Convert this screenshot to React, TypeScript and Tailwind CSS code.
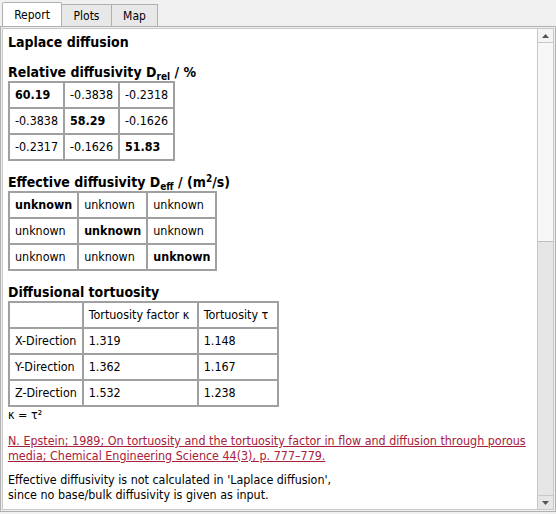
import React from "react";

const cell = "border border-[#a0a0a0] px-[5px] h-[26px] whitespace-nowrap";

function Grid({ rows, bold }: { rows: string[][]; bold: boolean }) {
  return (
    <table className="border border-[#a0a0a0] border-separate [border-spacing:0] text-[12.4px]">
      <tbody>
        {rows.map((r, i) => (
          <tr key={i}>
            {r.map((c, j) => (
              <td key={j} className={cell + (bold && i === j ? " font-bold" : "")}>
                {c}
              </td>
            ))}
          </tr>
        ))}
      </tbody>
    </table>
  );
}

export default function App() {
  return (
    <div
      className="w-[556px] h-[514px] bg-[#f0f0f0] flex flex-col text-black"
      style={{ fontFamily: "Tahoma, 'DejaVu Sans Condensed', 'Liberation Sans', sans-serif" }}
    >
      <div className="flex items-end h-[26px] pl-[2px] text-[12px]">
        <div className="h-[24px] w-[60px] bg-white border border-b-0 border-[#b0b0b0] rounded-t-[2px] flex items-center justify-center">
          Report
        </div>
        <div className="h-[22px] w-[50px] bg-[#e8e8e8] border border-l-0 border-b-0 border-[#b0b0b0] flex items-center justify-center">
          Plots
        </div>
        <div className="h-[22px] w-[46px] bg-[#e8e8e8] border border-l-0 border-b-0 border-[#b0b0b0] flex items-center justify-center">
          Map
        </div>
      </div>
      <div className="flex-1 mb-[2px] border border-[#b0b0b0] bg-[#f0f0f0] p-[1px] flex">
        <div className="flex-1 border border-[#c8c8c8] bg-white flex min-h-0">
          <div className="flex-1 pl-[5px] pt-[4px] overflow-hidden">
            <div className="text-[14px] font-bold leading-[18px]">Laplace diffusion</div>
            <div className="text-[14px] font-bold leading-[18px] mt-[12px]">
              Relative diffusivity D<sub className="text-[10px]">rel</sub> / %
            </div>
            <Grid
              bold
              rows={[
                ["60.19", "-0.3838", "-0.2318"],
                ["-0.3838", "58.29", "-0.1626"],
                ["-0.2317", "-0.1626", "51.83"],
              ]}
            />
            <div className="text-[14px] font-bold leading-[18px] mt-[12px]">
              Effective diffusivity D<sub className="text-[10px]">eff</sub> / (m<sup className="text-[10px]">2</sup>/s)
            </div>
            <Grid
              bold
              rows={[
                ["unknown", "unknown", "unknown"],
                ["unknown", "unknown", "unknown"],
                ["unknown", "unknown", "unknown"],
              ]}
            />
            <div className="text-[14px] font-bold leading-[18px] mt-[12px]">Diffusional tortuosity</div>
            <table className="border border-[#a0a0a0] border-separate [border-spacing:0] text-[12.4px]">
              <tbody>
                <tr>
                  <td className={cell + " w-[72px]"}></td>
                  <td className={cell + " w-[115px]"}>Tortuosity factor κ</td>
                  <td className={cell + " w-[80px]"}>Tortuosity τ</td>
                </tr>
                {[
                  ["X-Direction", "1.319", "1.148"],
                  ["Y-Direction", "1.362", "1.167"],
                  ["Z-Direction", "1.532", "1.238"],
                ].map((r, i) => (
                  <tr key={i}>
                    {r.map((c, j) => (
                      <td key={j} className={cell}>
                        {c}
                      </td>
                    ))}
                  </tr>
                ))}
              </tbody>
            </table>
            <div className="text-[12.4px] leading-[15px]">κ = τ²</div>
            <div className="text-[12.4px] leading-[15px] mt-[11px] text-[#a8203a] underline pr-[8px]">
              N. Epstein; 1989; On tortuosity and the tortuosity factor in flow and diffusion through porous
              media; Chemical Engineering Science 44(3), p. 777–779.
            </div>
            <div className="text-[12.4px] leading-[15px] mt-[9px]">
              Effective diffusivity is not calculated in 'Laplace diffusion',
              <br />
              since no base/bulk diffusivity is given as input.
            </div>
          </div>
          <div className="w-[16px] flex flex-col bg-[#e6e6e6] border-l border-[#c8c8c8]">
            <div className="h-[14px] bg-[#f4f4f4] border-b border-[#c8c8c8] flex items-center justify-center">
              <svg width="7" height="4" viewBox="0 0 7 4">
                <polygon points="0,4 7,4 3.5,0" fill="#555" />
              </svg>
            </div>
            <div className="h-[199px] bg-[#f7f7f7] border-b border-[#c0c0c0]"></div>
            <div className="flex-1"></div>
            <div className="h-[14px] border-t border-[#c8c8c8] flex items-center justify-center">
              <svg width="7" height="4" viewBox="0 0 7 4">
                <polygon points="0,0 7,0 3.5,4" fill="#555" />
              </svg>
            </div>
          </div>
        </div>
      </div>
    </div>
  );
}
